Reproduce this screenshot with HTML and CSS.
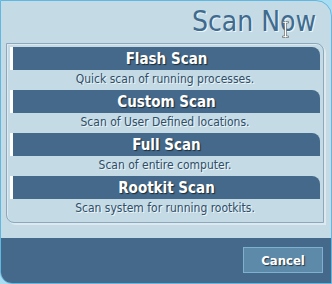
FILE: index.html
```html
<!DOCTYPE html>
<html>
<head>
    <meta charset="utf-8">
    <title>Scan Now</title>
    <link rel="stylesheet" href="styles.css">
</head>
<body>
    <div class="window">
        <div class="title">Scan Now</div>
        <div class="panel">
            <div class="item">
                <div class="item-head"><span>Flash Scan</span></div>
                <div class="item-desc">Quick scan of running processes.</div>
            </div>
            <div class="item">
                <div class="item-head"><span>Custom Scan</span></div>
                <div class="item-desc">Scan of User Defined locations.</div>
            </div>
            <div class="item">
                <div class="item-head"><span>Full Scan</span></div>
                <div class="item-desc">Scan of entire computer.</div>
            </div>
            <div class="item">
                <div class="item-head"><span>Rootkit Scan</span></div>
                <div class="item-desc">Scan system for running rootkits.</div>
            </div>
        </div>
        <div class="footer">
            <button class="btn">Cancel</button>
        </div>
        <svg class="cursor" width="7" height="17" viewBox="0 0 7 17">
            <path d="M0.5 0.5h2.5l0.5 0.5l0.5 -0.5h2.5v1.5h-2v13h2v1.5h-2.5l-0.5 -0.5l-0.5 0.5h-2.5v-1.5h2v-13h-2z" fill="#fff" stroke="#555" stroke-width="0.6"/>
        </svg>
    </div>
</body>
</html>
```

FILE: styles.css
```css
* {
    margin: 0;
    padding: 0;
    box-sizing: border-box;
}

body {
    background: #a9ddf2;
    font-family: "DejaVu Sans Condensed", "DejaVu Sans", sans-serif;
}

.window {
    position: relative;
    width: 332px;
    height: 284px;
    border: 1px solid #5fb8e2;
    border-radius: 0 16px 0 12px;
    background: #c4dbe6;
    overflow: hidden;
    display: flex;
    flex-direction: column;
}

.title {
    height: 42px;
    padding: 4px 15px 0 0;
    text-align: right;
    font-size: 28px;
    line-height: 34px;
    color: #3e6b8e;
    text-shadow: 1px 1px 0 #eef5f9;
}

.panel {
    margin: 0 7px 0 5px;
    padding: 3px;
    border: 1px solid #8ba8bc;
    border-radius: 0 8px 0 8px;
    box-shadow: 2px 2px 0 #dde9ef, inset 1px 1px 0 #dde9ef;
}

.item-head {
    height: 23px;
    border-left: 3px solid #fff;
    border-radius: 0 8px 0 0;
    background: #44698a;
    text-align: center;
}

.item-head span {
    font-size: 15px;
    line-height: 24px;
    font-weight: bold;
    color: #fff;
    text-shadow: 1px 1px 1px #1c2b38;
}

.item-desc {
    height: 20px;
    text-align: center;
    font-size: 12px;
    line-height: 19px;
    color: #2f4e68;
    text-shadow: 1px 1px 0 #eef5f9;
}

.footer {
    margin-top: 15px;
    flex: 1;
    background: #44698a;
    display: flex;
    justify-content: flex-end;
    align-items: flex-start;
    padding: 9px 8px 0 0;
}

.btn {
    width: 80px;
    height: 26px;
    border: 1px solid #7eb0d0;
    background: #5e8aa9;
    font-family: inherit;
    font-size: 13px;
    font-weight: bold;
    color: #fff;
    text-shadow: 1px 1px 1px #23384a;
}

.cursor {
    position: absolute;
    left: 281px;
    top: 20px;
}
```
